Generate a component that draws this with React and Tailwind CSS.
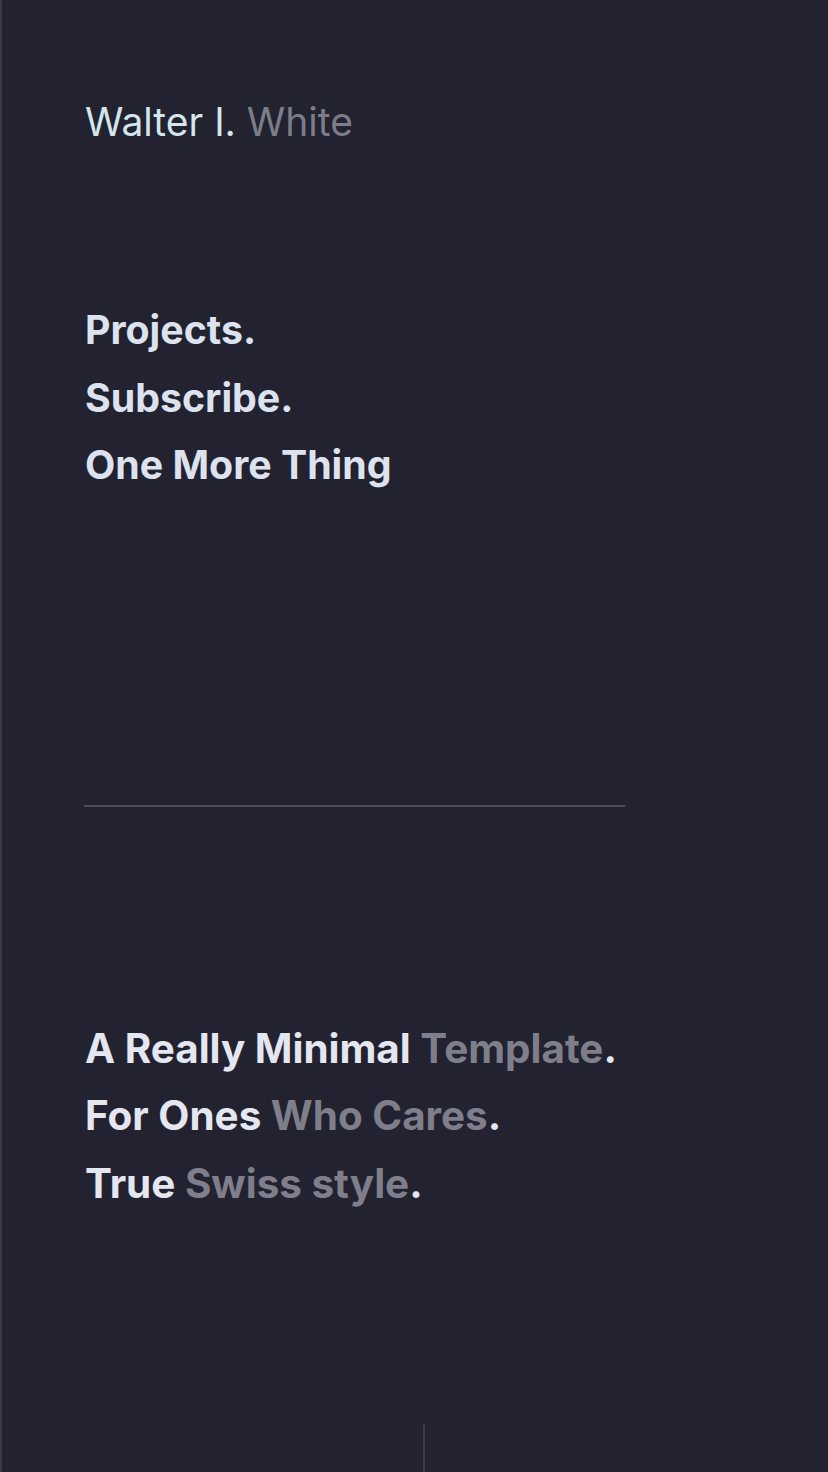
import React from 'react';

const navItems = ['Projects.', 'Subscribe.', 'One More Thing'];

const taglines = [
  { strong: 'A Really Minimal', soft: 'Template' },
  { strong: 'For Ones', soft: 'Who Cares' },
  { strong: 'True', soft: 'Swiss style' },
];

export default function App() {
  return (
    <div
      className="min-h-screen h-[1472px] overflow-hidden bg-[#232230] border-l-2 border-[#3a3a48] flex flex-col"
      style={{ fontFamily: 'Inter, "Noto Sans", sans-serif' }}
    >
      <header className="pl-[83px] pt-[98px]">
        <h1 className="text-[39px] leading-[48px] font-normal text-[#d3e6ec]">
          Walter I. <span className="text-[#7b7e89]">White</span>
        </h1>
      </header>

      {/* Nav */}
      <nav className="pl-[83px] pt-[150px]">
        <ul className="flex flex-col">
          {navItems.map((item) => (
            <li key={item} className="text-[39.3px] leading-[67.5px] font-bold text-[#dde3ee]">
              {item}
            </li>
          ))}
        </ul>
      </nav>

      <div className="ml-[82px] mt-[306px] w-[541px] h-[2px] bg-[#4b4b5a]" />

      {/* Tagline */}
      <section className="pl-[83px] pt-[208px]">
        {taglines.map((t) => (
          <p key={t.strong} className="text-[40.4px] leading-[67.5px] font-bold text-[#e4e7ef]">
            {t.strong} <span className="text-[#7e7f8b]">{t.soft}</span>.
          </p>
        ))}
      </section>

      <div className="mt-auto ml-[421px] w-[2px] h-[48px] bg-[#3d3c4a]" />
    </div>
  );
}
